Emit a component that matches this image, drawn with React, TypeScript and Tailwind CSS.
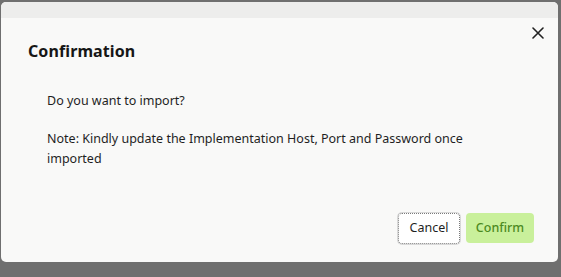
import React from "react";

export default function App() {
  return (
    <div className="w-[561px] h-[277px] bg-[#6f6f6f] overflow-hidden pl-[1px] pt-[2px]" style={{ fontFamily: '"Noto Sans", "Open Sans", sans-serif' }}>
      <div className="w-[557px] h-[260px] bg-[#f9f9f8] rounded-[5px] overflow-hidden flex flex-col">
        <div className="h-[16px] bg-[#ededec] shrink-0" />
        <div className="flex items-start justify-between pl-[27px] pr-[10px] pt-[22px]">
          <h1 className="text-[16px] font-bold text-[#161616] leading-[22px] tracking-[0.1px]">Confirmation</h1>
          <button className="-mt-[17px] w-[20px] h-[20px] flex items-center justify-center text-[#222]">
            <svg width="12" height="12" viewBox="0 0 12 12" fill="none" stroke="currentColor" strokeWidth="1.6" strokeLinecap="round">
              <path d="M1 1 L11 11 M11 1 L1 11" />
            </svg>
          </button>
        </div>
        <div className="pl-[46px] pt-[29px] text-[12.5px] leading-[20px] text-[#1f1f1f]">
          <p>Do you want to import?</p>
          <p className="mt-[18px] w-[425px]">Note: Kindly update the Implementation Host, Port and Password once imported</p>
        </div>
        <div className="flex-1" />
        <div className="flex justify-end gap-[6px] pr-[24px] pb-[18px]">
          <button className="w-[62px] h-[31px] rounded-[4px] bg-white border border-dotted border-[#7a7a7a] text-[12.5px] text-[#1f1f1f] shadow-[0_0_0_1px_#d8d8d8]">Cancel</button>
          <button className="w-[68px] h-[30px] rounded-[4px] bg-[#c9f09b] text-[12.5px] text-[#4c8a1f] font-medium">Confirm</button>
        </div>
      </div>
    </div>
  );
}
